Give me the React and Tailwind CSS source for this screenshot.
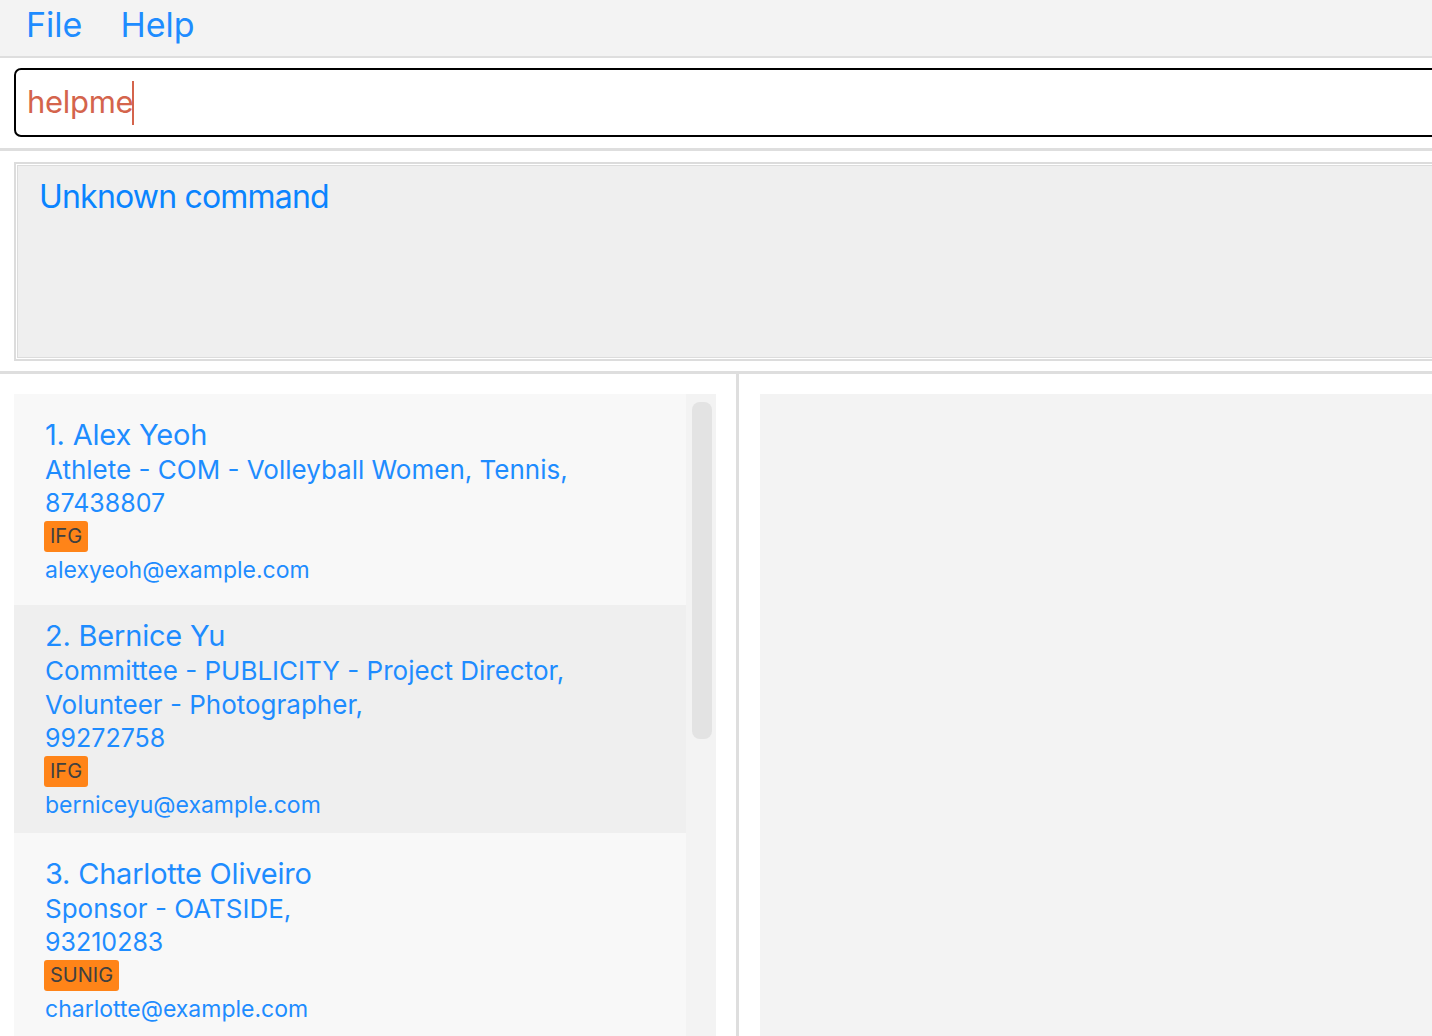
import React from 'react';

const persons = [
    {
        name: '1. Alex Yeoh',
        roles: ['Athlete - COM - Volleyball Women, Tennis,'],
        phone: '87438807',
        tag: 'IFG',
        email: 'alexyeoh@example.com',
    },
    {
        name: '2. Bernice Yu',
        roles: ['Committee - PUBLICITY - Project Director,', 'Volunteer - Photographer,'],
        phone: '99272758',
        tag: 'IFG',
        email: 'berniceyu@example.com',
    },
    {
        name: '3. Charlotte Oliveiro',
        roles: ['Sponsor - OATSIDE,'],
        phone: '93210283',
        tag: 'SUNIG',
        email: 'charlotte@example.com',
    },
];

const PersonCard = ({ person, index }) => (
    <div className={`pl-[31px] ${index % 2 === 1 ? 'bg-[#efefef] pt-[12px] pb-[11px]' : 'bg-[#f8f8f8] pt-[22px] pb-[18px]'}`}>
        <div className="text-[29px] leading-[37px] text-[#1e8cff] tracking-[-0.2px]">{person.name}</div>
        {person.roles.map((r) => (
            <div key={r} className="text-[26px] leading-[34px] text-[#1e8cff]">{r}</div>
        ))}
        <div className="text-[25px] leading-[33px] text-[#1e8cff]">{person.phone}</div>
        <div className="flex py-[1px] -ml-px">
            <span className="bg-[#ff8418] text-[#404040] text-[20px] leading-[31px] px-[6px] rounded-[3px]">{person.tag}</span>
        </div>
        <div className="text-[23px] leading-[34px] text-[#1e8cff]">{person.email}</div>
    </div>
);

export default function App() {
    return (
        <div className="w-[1432px] h-[1036px] overflow-hidden bg-white" style={{ fontFamily: 'Inter, "Noto Sans", sans-serif' }}>
            <div className="w-[1470px]">
                {/* Menu bar */}
                <div className="h-[58px] bg-[#f3f3f3] border-b-2 border-[#dedede] flex items-center gap-[38px] pl-[26px] pb-[8px]">
                    <span className="text-[34px] text-[#1e8cff]">File</span>
                    <span className="text-[34px] text-[#1e8cff]">Help</span>
                </div>

                {/* Command box */}
                <div className="px-[14px] pt-[10px] pb-[11px] border-b-[3px] border-[#dedede]">
                    <div className="h-[69px] border-2 border-black rounded-[7px] flex items-center pl-[11px]">
                        <span className="text-[31px] tracking-[-0.3px] text-[#d4644c]">helpme</span>
                        <span className="w-[2px] h-[44px] bg-[#d4644c] -ml-[1px]"></span>
                    </div>
                </div>

                {/* Result display */}
                <div className="px-[14px] pt-[11px] pb-[10px] border-b-[3px] border-[#dedede]">
                    <div className="border-2 border-[#dcdcdc] p-px bg-white">
                        <div className="h-[193px] border border-[#dcdcdc] bg-[#efefef] pl-[21px] pt-[7px]">
                            <span className="text-[32px] tracking-[-0.8px] text-[#0a84ff]">Unknown command</span>
                        </div>
                    </div>
                </div>

                {/* Lists */}
                <div className="flex h-[700px]">
                    <div className="w-[736px] pl-[14px] pt-[20px] pr-[20px]">
                        <div className="flex h-full">
                            <div className="w-[672px] flex flex-col">
                                {persons.map((p, i) => (
                                    <PersonCard key={p.name} person={p} index={i} />
                                ))}
                            </div>
                            <div className="w-[30px] bg-[#f3f3f3] pl-[6px] pt-[8px]">
                                <div className="w-[20px] h-[337px] bg-[#e3e3e3] rounded-[8px]"></div>
                            </div>
                        </div>
                    </div>
                    <div className="w-[3px] bg-[#dedede]"></div>
                    <div className="flex-1 pl-[21px] pt-[20px]">
                        <div className="h-full bg-[#f3f3f3]"></div>
                    </div>
                </div>
            </div>
        </div>
    );
}
